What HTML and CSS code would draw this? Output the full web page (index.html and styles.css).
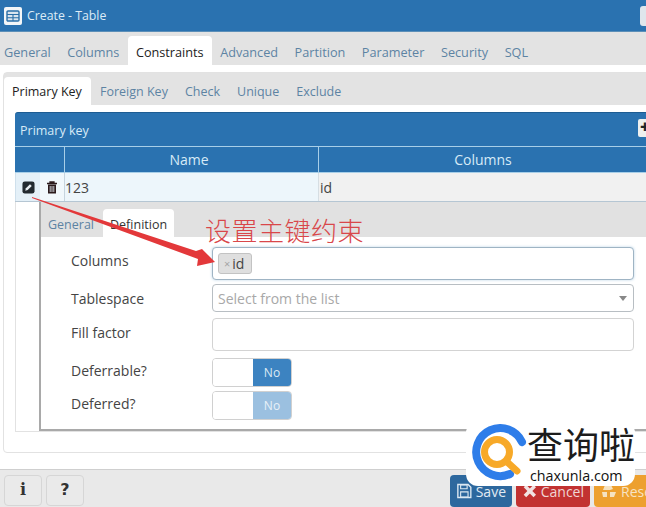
FILE: index.html
```html
<!DOCTYPE html>
<html lang="en">
<head>
<meta charset="utf-8">
<title>Create - Table</title>
<link rel="stylesheet" href="styles.css">
</head>
<body>
<div class="window">
  <header class="titlebar">
    <span class="title-icon"><svg width="18" height="18" viewBox="0 0 18 18"><rect x="3" y="4" width="12" height="10" rx="1" fill="#d9e4ee" stroke="#2a6fa8" stroke-width="1.4"/><path d="M3 7.5h12M3 10.8h12M9 7.5v6.5" stroke="#2a6fa8" stroke-width="1.1" fill="none"/></svg></span>
    <span class="title-text">Create - Table</span>
    <span class="title-close"></span>
  </header>
  <nav class="tabs main-tabs">
    <span class="tab">General</span>
    <span class="tab">Columns</span>
    <span class="tab active">Constraints</span>
    <span class="tab">Advanced</span>
    <span class="tab">Partition</span>
    <span class="tab">Parameter</span>
    <span class="tab">Security</span>
    <span class="tab">SQL</span>
  </nav>
  <main class="content">
    <div class="box">
      <nav class="tabs sub-tabs">
        <span class="tab active">Primary Key</span>
        <span class="tab">Foreign Key</span>
        <span class="tab">Check</span>
        <span class="tab">Unique</span>
        <span class="tab">Exclude</span>
      </nav>
      <section class="panel">
        <div class="panel-head">
          <span>Primary key</span>
          <span class="add-btn">+</span>
        </div>
        <div class="grid-row grid-head">
          <span class="cell-icons"></span>
          <span class="cell-name">Name</span>
          <span class="cell-cols">Columns</span>
        </div>
        <div class="grid-row grid-body">
          <span class="cell-edit"><svg width="13" height="13" viewBox="0 0 14 14"><rect x="0.5" y="0.5" width="13" height="13" rx="2.5" fill="#222a30"/><path d="M3.5 10.5l.7-2.6 4.400-4.400 1.900 1.900-4.400 4.400z" fill="#e9eef2"/></svg></span>
          <span class="cell-trash"><svg width="12" height="13" viewBox="0 0 12 13"><path d="M1 2.5h10M4 2.5V1h4v1.5" stroke="#2b1a1c" stroke-width="1.3" fill="none"/><path d="M2 3.5h8v9H2z" fill="#2b1a1c"/><path d="M4.2 5v6M6 5v6M7.8 5v6" stroke="#e9f3fa" stroke-width=".8"/></svg></span>
          <span class="cell-name-val">123</span>
          <span class="cell-cols-val">id</span>
        </div>
        <div class="detail-wrap">
          <div class="detail">
            <nav class="tabs detail-tabs">
              <span class="tab">General</span>
              <span class="tab active">Definition</span>
            </nav>
            <div class="form">
              <div class="form-row row-columns">
                <label>Columns</label>
                <div class="field focus"><span class="chip"><i>×</i>id</span></div>
              </div>
              <div class="form-row row-space">
                <label>Tablespace</label>
                <div class="field select"><span class="placeholder">Select from the list</span><span class="caret"></span></div>
              </div>
              <div class="form-row row-fill">
                <label>Fill factor</label>
                <div class="field plain"></div>
              </div>
              <div class="form-row row-defer">
                <label>Deferrable?</label>
                <div class="switch"><span class="off"></span><span class="on">No</span></div>
              </div>
              <div class="form-row row-defer">
                <label>Deferred?</label>
                <div class="switch disabled"><span class="off"></span><span class="on">No</span></div>
              </div>
            </div>
          </div>
        </div>
      </section>
    </div>
  </main>
  <footer class="footer">
    <div class="foot-left">
      <span class="foot-btn">i</span>
      <span class="foot-btn">?</span>
    </div>
    <div class="foot-right">
      <span class="action save"><svg width="18" height="18" viewBox="0 0 18 18"><path d="M2 2h11l3 3v11H2z" fill="none" stroke="#dbe7f1" stroke-width="1.5"/><path d="M5 2.500h7v4H5zM5 10h8v5.500H5z" fill="none" stroke="#dbe7f1" stroke-width="1.2"/></svg>Save</span>
      <span class="action cancel"><svg width="16" height="16" viewBox="0 0 16 16"><path d="M3 3l10 10M13 3L3 13" stroke="#f1e3e3" stroke-width="3.600"/></svg>Cancel</span>
      <span class="action reset"><svg width="18" height="16" viewBox="0 0 18 16"><path d="M5 2h6l2 4-3 1H3zM2 9h5v5H3zM10 9h6l-2 5h-4z" fill="#f5e3c2"/></svg>Reset</span>
    </div>
  </footer>
</div>

<svg class="arrow" width="200" height="85" viewBox="0 0 200 85">
  <path d="M6 5L170 59l6-2 13 13-18 4 1-7L6 6z" fill="#e3383a"/>
</svg>
<div class="annotation">设置主键约束</div>

<div class="watermark">
  <svg class="wm-logo" width="58" height="58" viewBox="0 0 58 58">
    <path d="M50 18A24 24 0 1 0 38 50" fill="none" stroke="#2e7de9" stroke-width="8" stroke-linecap="round"/>
    <circle cx="25" cy="28" r="12.500" fill="none" stroke="#f7a928" stroke-width="7"/>
    <path d="M34 37l11 10" stroke="#f7a928" stroke-width="7" stroke-linecap="round"/>
  </svg>
  <div class="wm-text">
    <div class="wm-cn">查询啦</div>
    <div class="wm-en">chaxunla.com</div>
  </div>
</div>
</body>
</html>
```

FILE: styles.css
```css
* { box-sizing: border-box; }
html, body { margin: 0; padding: 0; }
body {
  width: 646px;
  height: 507px;
  overflow: hidden;
  position: relative;
  background: #fff;
  font-family: "Open Sans", "Noto Sans", sans-serif;
  font-size: 13px;
  color: #333;
}
.window { width: 646px; height: 507px; display: flex; flex-direction: column; overflow: hidden; }

.titlebar {
  height: 32px;
  flex: none;
  background: #2a72b0;
  border-bottom: 1px solid #5c8fb8;
  display: flex;
  align-items: center;
  padding: 0 0 0 4px;
  color: #dcecf7;
  font-size: 12.300px;
}
.title-icon { width: 18px; height: 18px; background: #f2f6f8; border-radius: 2px; display: flex; margin-right: 5px; }
.title-text { flex: 1; }
.title-close { width: 6px; height: 20px; background: #dfe6ec; border-radius: 3px 0 0 3px; }

.tabs { display: flex; background: #e3e3e3; }
.tab { color: #5d83a3; display: block; }
.tab.active { background: #fff; color: #222; border-radius: 4px 4px 0 0; }

.main-tabs { height: 33px; flex: none; padding-left: 4px; gap: 16.500px; align-items: flex-end; font-size: 12.700px; }
.main-tabs .tab { height: 33px; line-height: 41px; }
.main-tabs .tab.active { height: 29px; line-height: 32px; margin: 0 -8px; padding: 0 8px; }

.content { flex: 1; min-height: 0; padding: 7px 0 16px 3px; overflow: hidden; }
.box { height: 100%; width: 660px; border: 1px solid #e2e2e2; border-radius: 4px; background: #fff; }

.sub-tabs { height: 32px; gap: 17px; padding-left: 0; font-size: 12.500px; align-items: flex-end; }
.sub-tabs .tab { line-height: 38px; height: 32px; }
.sub-tabs .tab.active { height: 28px; line-height: 30px; padding: 0 8px; width: 87px; border-radius: 4px 4px 0 0; margin-right: -8px; }

.panel { margin: 7px 0 0 11px; width: 660px; }
.panel-head {
  height: 34px;
  background: #2a72b0;
  border-top: 1px solid #1d5c92;
  color: #d7ebf7;
  font-size: 12.500px;
  display: flex;
  align-items: center;
  padding: 2px 22px 0 5px;
  border-radius: 3px 3px 0 0;
  justify-content: space-between;
}
.add-btn {
  width: 16px;
  height: 18px;
  background: #eef0ef;
  color: #1d2429;
  font-weight: 800;
  font-size: 17px;
  line-height: 16px;
  padding-left: 2px;
  margin-top: -5px;
  border-radius: 2px 0 0 2px;
  margin-right: -1px;
}

.grid-row { display: flex; }
.grid-head {
  height: 27px;
  background: #2a72b0;
  border-top: 1px solid #a8cfe8;
  border-bottom: 1px solid #a8cfe8;
  color: #d7ebf7;
  font-size: 14px;
  line-height: 25px;
  text-align: center;
}
.cell-icons { width: 50px; flex: none; border-right: 1px solid #a8cfe8; }
.cell-name { width: 254px; flex: none; border-right: 1px solid #a8cfe8; padding-right: 5px; }
.cell-cols { width: 328px; flex: none; }

.grid-body { height: 29px; border-bottom: 1px solid #b5c6d3; line-height: 30px; font-size: 14px; color: #444; }
.cell-edit { width: 25px; flex: none; background: #e4f0f8; display: flex; align-items: center; justify-content: center; border-left: 1px solid #cfe0ec; }
.cell-trash { width: 25px; flex: none; background: #f1f8fc; display: flex; align-items: center; justify-content: center; border-right: 1px solid #c6d4de; }
.cell-name-val { width: 254px; flex: none; background: #edf6fb; border-right: 1px solid #d6dee3; }
.cell-cols-val { flex: 1; background: #f1f1f1; padding-left: 1px; }

.detail-wrap { padding-left: 23px; border-left: 1px solid #e2e2e2; width: 660px; border-bottom: 1px solid #e2e2e2; }
.detail { border-left: 2px solid #a9a9a9; border-bottom: 2px solid #a9a9a9; height: 229px; background: #fff; }

.detail-tabs { height: 35px; padding-left: 7px; gap: 8px; font-size: 12.500px; align-items: flex-end; background: #e1e1e1; }
.detail-tabs .tab { height: 35px; line-height: 46px; }
.detail-tabs .tab.active { height: 28px; line-height: 31px; padding: 0 7px; margin-left: 1px; color: #333; }

.form { padding-top: 10px; }
.form-row { display: flex; padding-left: 30px; font-size: 14px; color: #444; }
.form-row label { width: 141px; flex: none; }
.field { width: 422px; background: #fff; border: 1px solid #b8bec3; border-radius: 4px; }
.row-columns { height: 35px; margin-bottom: 2px; }
.row-columns label { line-height: 28px; }
.row-columns .field { height: 33px; }
.field.focus { border-color: #9fb4c4; box-shadow: 0 0 3px #bcd4e6; padding: 5px; }
.chip {
  display: inline-flex;
  align-items: center;
  height: 21px;
  width: 34px;
  background: #dfdfdf;
  border: 1px solid #c3c3c3;
  border-radius: 3px;
  color: #444;
  font-size: 14px;
  padding-left: 5px;
}
.chip i { font-style: normal; color: #a5a5a5; font-size: 11px; margin-right: 2px; }
.row-space { height: 28px; margin-bottom: 6px; }
.row-space label { line-height: 30px; }
.field.select { height: 28px; display: flex; align-items: center; justify-content: space-between; padding: 0 6px 0 5px; }
.placeholder { color: #a8a8a8; font-size: 14px; }
.caret { border: 4px solid transparent; border-top: 5px solid #888; border-bottom: 0; margin-right: 0; }
.row-fill { height: 33px; margin-bottom: 7px; }
.row-fill label { line-height: 29px; }
.field.plain { height: 33px; border-color: #d3d3d3; }
.row-defer { height: 29px; margin-bottom: 4px; }
.row-defer label { line-height: 25px; }
.switch { width: 80px; height: 29px; display: flex; border: 1px solid #d0d0d0; border-radius: 4px; overflow: hidden; }
.switch .off { width: 40px; background: #fff; }
.switch .on { flex: 1; background: #3c83c1; color: #dbeaf5; font-size: 12px; line-height: 27px; text-align: center; }
.switch.disabled .on { background: #9bc0e0; color: #e8f1f8; }

.footer {
  height: 38px;
  flex: none;
  background: #e9e9e9;
  border-top: 1px solid #cfcfcf;
  display: flex;
  justify-content: space-between;
  padding: 5px 0 0 4px;
}
.foot-left { display: flex; gap: 4px; }
.foot-btn {
  width: 38px;
  height: 31px;
  background: #eaeaea;
  border: 1px solid #d6d6d6;
  border-radius: 4px;
  text-align: center;
  font-family: "DejaVu Serif", serif;
  font-weight: 700;
  font-size: 16px;
  line-height: 28px;
  color: #333;
}
.foot-btn:last-child { font-family: "DejaVu Sans", sans-serif; }
.foot-right { display: flex; gap: 4px; margin-right: -38px; }
.action {
  height: 32px;
  display: flex;
  align-items: center;
  gap: 3px;
  padding: 0 6px;
  border-radius: 4px;
  color: #e1ebf3;
  font-size: 14px;
}
.save { background: #2d689e; width: 62px; }
.cancel { background: #c23231; width: 74px; color: #f0d5d5; }
.reset { background: #eda02f; width: 90px; color: #f7e3c4; }

.arrow { position: absolute; left: 26px; top: 192px; }
.annotation {
  position: absolute;
  left: 205px;
  top: 212px;
  font-family: "Noto Sans CJK SC", serif;
  font-size: 26px;
  line-height: 36px;
  letter-spacing: 0.500px;
  color: #d9474a;
  font-weight: 300;
}

.watermark {
  position: absolute;
  left: 466px;
  top: 421px;
  width: 169px;
  height: 65px;
  display: flex;
  background: #fff;
  border-radius: 12px;
}
.wm-logo { flex: none; margin: 3px -3px 0 6px; }
.wm-text { width: 105px; }
.wm-cn {
  font-family: "Noto Sans CJK SC", serif;
  font-size: 36px;
  line-height: 45px;
  color: #1c1c1c;
  white-space: nowrap;
}
.wm-en { font-size: 14.300px; line-height: 20px; color: #111; white-space: nowrap; padding-left: 3px; }
```
